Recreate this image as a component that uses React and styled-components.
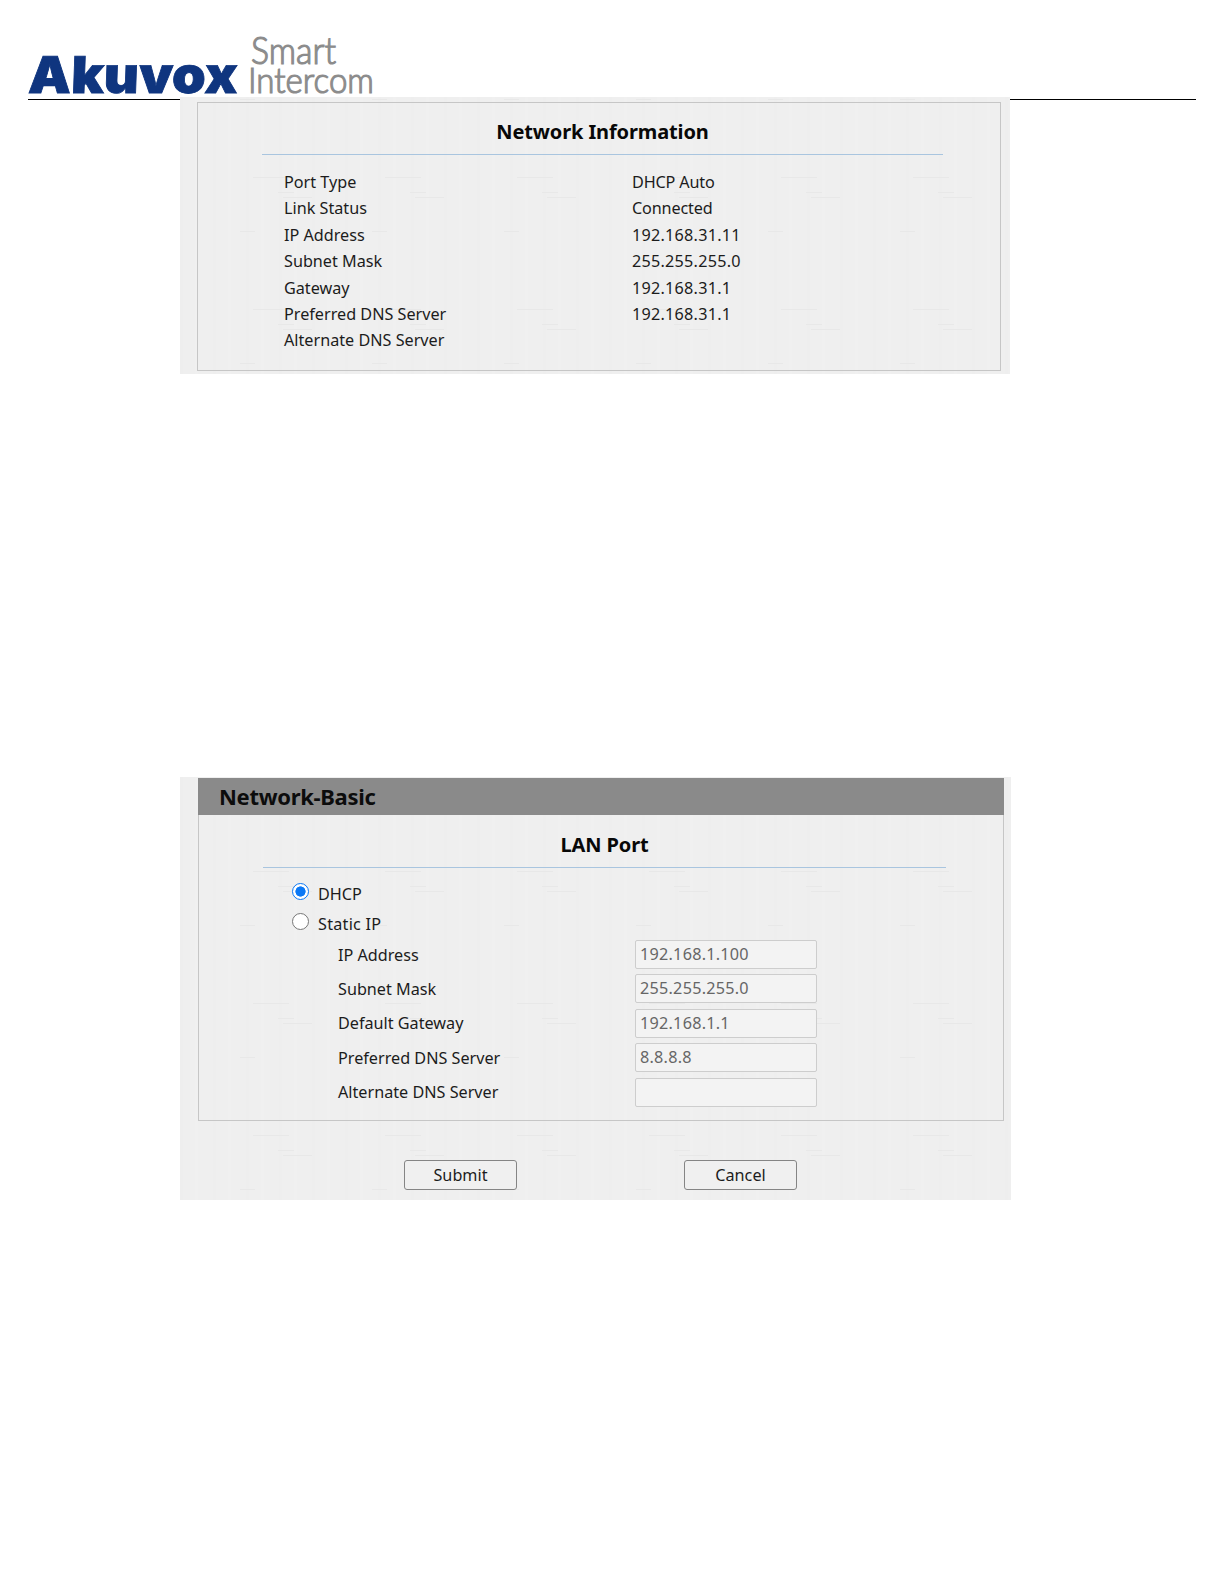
import React from "react";
import styled, { createGlobalStyle } from "styled-components";

const GlobalStyle = createGlobalStyle`
  * {
    box-sizing: border-box;
  }
  body {
    margin: 0;
    background: #fff;
    color: #1c1c1c;
    font-family: "Noto Sans", "Open Sans", sans-serif;
    font-size: 16.2px;
  }
`;

const Page = styled.div`
  width: 1224px;
  height: 1584px;
  overflow: hidden;
`;

const Header = styled.header`
  height: 100px;
  margin: 0 28px;
  border-bottom: 1px solid #000;
`;

const Logo = styled.svg`
  display: block;
  overflow: visible;
`;

const Panel = styled.section`
  position: relative;
  width: ${(p) => p.$width}px;
  height: ${(p) => p.$height}px;
  margin: ${(p) => p.$top}px 0 0 180px;
  padding: ${(p) => p.$padding};
  background: repeating-linear-gradient(
    90deg,
    #eeeeee 0 3px,
    #efefef 3px 15px,
    #f0f0f0 15px 18px,
    #efefef 18px 33px
  );
`;

// faint paper threads under the panel content
const Weave = styled.svg`
  position: absolute;
  inset: 0;
  width: 100%;
  height: 100%;
`;

const Content = styled.div`
  position: relative;
`;

const Box = styled.div`
  height: ${(p) => p.$height}px;
  border: 1px solid #c6c6c6;
  border-top-width: ${(p) => (p.$flush ? 0 : 1)}px;
`;

const Bar = styled.h1`
  height: 37px;
  margin: 0;
  padding-left: 21px;
  background: #8a8a8a;
  color: #0c0c0c;
  font-size: 22px;
  line-height: 36px;
  font-weight: 700;
  letter-spacing: -0.3px;
`;

const Title = styled.h2`
  height: ${(p) => p.$height}px;
  margin: 0 57px 0 64px;
  padding-top: ${(p) => p.$top}px;
  border-bottom: 1px solid #a9c5df;
  color: #080808;
  font-size: 20px;
  line-height: 28px;
  font-weight: 700;
  letter-spacing: -0.12px;
  text-align: center;
`;

const InfoList = styled.div`
  padding: 14px 0 0 86px;
`;

const InfoRow = styled.div`
  display: grid;
  grid-template-columns: 348px 1fr;
  height: 26.4px;
  line-height: 26.4px;
`;

const Value = styled.span`
  letter-spacing: ${(p) => (p.$numeric ? "0.24px" : "-0.15px")};
`;

const RadioList = styled.div`
  padding: 11px 0 0 93px;
`;

const RadioRow = styled.label`
  display: flex;
  align-items: center;
  height: 30.2px;
  letter-spacing: ${(p) => p.$spacing || 0}px;
`;

const Radio = styled.span`
  width: 17px;
  height: 17px;
  margin: -5px 9px 0 0;
  border: ${(p) => (p.$checked ? "1.8px solid #0b78f5" : "1.4px solid #777")};
  border-radius: 50%;
  background: ${(p) =>
    p.$checked ? "radial-gradient(circle, #0b78f5 0 4.8px, #fff 5.4px)" : "#fff"};
`;

const FieldList = styled.div`
  margin-top: -2px;
  padding-left: 139px;
`;

const FieldRow = styled.div`
  display: grid;
  grid-template-columns: 297px 182px;
  align-items: center;
  height: 34.4px;
`;

const Field = styled.div`
  height: 29px;
  padding-left: 4px;
  border: 1.5px solid #cdcdcd;
  border-radius: 2px;
  background: #f3f3f3;
  color: #666;
  line-height: 27px;
  letter-spacing: 0.25px;
`;

const Actions = styled.div`
  display: flex;
  gap: 167px;
  padding: 39px 0 0 206px;
`;

const Button = styled.button`
  width: 113px;
  height: 30px;
  padding: 0;
  border: 1.6px solid #858585;
  border-radius: 3px;
  background: #f0f0f0;
  color: #1c1c1c;
  font: inherit;
  line-height: 26px;
`;

const info = [
  ["Port Type", "DHCP Auto"],
  ["Link Status", "Connected"],
  ["IP Address", "192.168.31.11"],
  ["Subnet Mask", "255.255.255.0"],
  ["Gateway", "192.168.31.1"],
  ["Preferred DNS Server", "192.168.31.1"],
  ["Alternate DNS Server", ""],
];

const fields = [
  ["IP Address", "192.168.1.100"],
  ["Subnet Mask", "255.255.255.0"],
  ["Default Gateway", "192.168.1.1"],
  ["Preferred DNS Server", "8.8.8.8"],
  ["Alternate DNS Server", ""],
];

const AkuvoxLogo = () => (
  <Logo width="360" height="99" viewBox="28 0 360 99">
    <text
      x="28"
      y="93"
      fill="#0f357f"
      stroke="#0f357f"
      strokeWidth="0.8"
      fontFamily="Inter"
      fontWeight="900"
      fontSize="50.5"
      textLength="209.5"
      lengthAdjust="spacingAndGlyphs"
      transform="translate(3 0) skewX(-2)"
    >
      Akuvox
    </text>
    <g fill="#8c8c8c" fontFamily="Lato" fontWeight="300" stroke="#8c8c8c" strokeWidth="1.2">
      <text x="251" y="64.3" fontSize="37" textLength="85" lengthAdjust="spacingAndGlyphs">
        Smart
      </text>
      <text x="248" y="93.3" fontSize="35.5" textLength="126" lengthAdjust="spacingAndGlyphs">
        Intercom
      </text>
    </g>
  </Logo>
);

const Threads = ({ id, shift }) => (
  <Weave>
    <defs>
      <pattern id={id} width="132" height="132" y={shift} patternUnits="userSpaceOnUse">
        <g fill="#e8e8e8">
          <rect x="73" y="80" width="36" height="1" />
          <rect x="98" y="95" width="16" height="1" />
          <rect x="103" y="100" width="29" height="1" />
          <rect x="60" y="2" width="15" height="1" />
        </g>
      </pattern>
    </defs>
    <rect width="100%" height="100%" fill={`url(#${id})`} />
  </Weave>
);

const App = () => {
  return (
    <Page>
      <GlobalStyle />
      <Header>
        <AkuvoxLogo />
      </Header>

      <Panel $width={830} $height={277} $top={-3} $padding="5px 9px 0 17px">
        <Threads id="threads-info" shift={0} />
        <Content>
          <Box $height={269}>
            <Title $height={52} $top={15}>
              Network Information
            </Title>
            <InfoList>
              {info.map(([label, value]) => (
                <InfoRow key={label}>
                  <span>{label}</span>
                  <Value $numeric={/^\d/.test(value)}>{value}</Value>
                </InfoRow>
              ))}
            </InfoList>
          </Box>
        </Content>
      </Panel>

      <Panel $width={831} $height={423} $top={403} $padding="1px 7px 0 18px">
        <Threads id="threads-basic" shift={14} />
        <Content>
          <Bar>Network-Basic</Bar>
          <Box $height={306} $flush>
            <Title $height={53} $top={16}>
              LAN Port
            </Title>
            <RadioList>
              <RadioRow>
                <Radio $checked />
                DHCP
              </RadioRow>
              <RadioRow $spacing={0.25}>
                <Radio />
                Static IP
              </RadioRow>
            </RadioList>
            <FieldList>
              {fields.map(([label, value]) => (
                <FieldRow key={label}>
                  <span>{label}</span>
                  <Field>{value}</Field>
                </FieldRow>
              ))}
            </FieldList>
          </Box>
          <Actions>
            <Button>Submit</Button>
            <Button>Cancel</Button>
          </Actions>
        </Content>
      </Panel>
    </Page>
  );
};

export default App;
